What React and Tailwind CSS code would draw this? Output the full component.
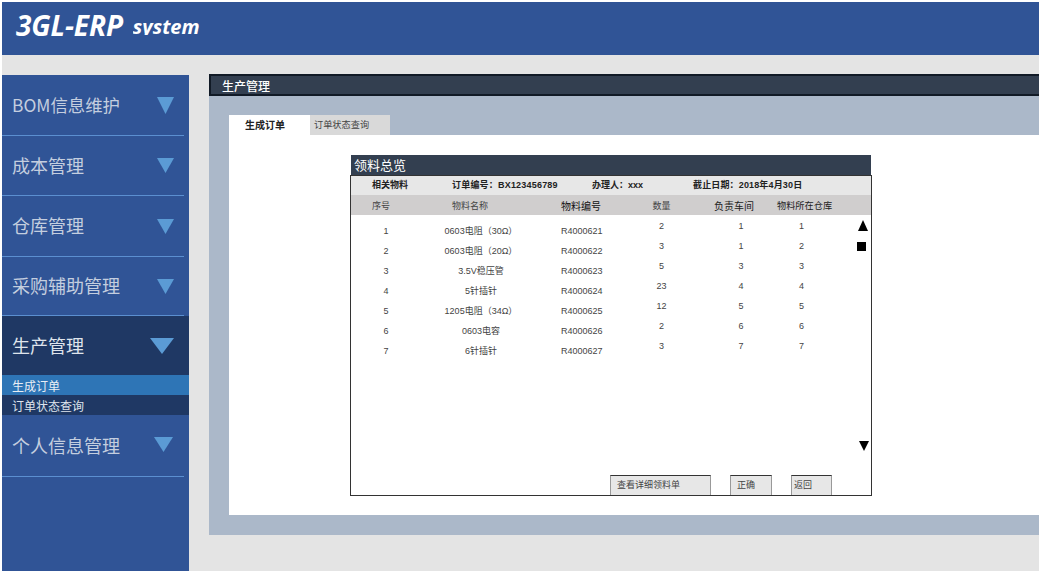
import React from "react";

const menu1 = [
  ["BOM信息维护", "h-[61px]", "mt-[2px]"],
  ["成本管理", "h-[60px]", "mt-[2px]"],
  ["仓库管理", "h-[61px]", ""],
  ["采购辅助管理", "h-[59px]", ""],
];
const left = [
  ["1", "0603电阻（30Ω）", "R4000621"],
  ["2", "0603电阻（20Ω）", "R4000622"],
  ["3", "3.5V稳压管", "R4000623"],
  ["4", "5针插针", "R4000624"],
  ["5", "1205电阻（34Ω）", "R4000625"],
  ["6", "0603电容", "R4000626"],
  ["7", "6针插针", "R4000627"],
];
const right = [
  ["2", "1", "1"],
  ["3", "1", "2"],
  ["5", "3", "3"],
  ["23", "4", "4"],
  ["12", "5", "5"],
  ["2", "6", "6"],
  ["3", "7", "7"],
];

function Tri({ w = 17, h = 17, cls = "" }) {
  return (
    <svg width={w} height={h} viewBox="0 0 10 10" preserveAspectRatio="none" className={cls}>
      <polygon points="0,0 10,0 5,10" fill="#5b9bd5" />
    </svg>
  );
}

export default function App() {
  return (
    <div className="w-[1039px] h-[572px] overflow-hidden bg-white pl-[2px] pt-[2px] pb-px font-['Liberation_Sans','Noto_Sans_CJK_SC',sans-serif]">
      <div className="h-full flex flex-col bg-[#e4e4e4]">
        <header className="h-[53px] shrink-0 bg-[#305496] flex items-start pl-[14px] text-white italic font-bold font-['Open_Sans',sans-serif]">
          <span className="text-[28px] leading-[46px] tracking-[-0.1px]">3GL-ERP</span>
          <span className="ml-[10px] mt-[10px] h-[23px] overflow-hidden text-[20px] leading-[30px]">system</span>
        </header>
        <div className="flex-1 flex pt-[20px] min-h-0">
          <aside className="w-[187px] shrink-0 bg-[#305496] text-[18px] text-[#c4cedf] font-['Noto_Sans_CJK_SC',sans-serif]">
            {menu1.map(([t, h, m], i) => (
              <div key={t} className={`${h} flex items-center justify-between pl-[10px] pr-[10px] mr-[5px] border-b border-[#5b8fd0] pb-[2px]`}>
                <span className={`${m} ${i === 0 ? "text-[17.4px]" : ""}`}>{t}</span>
                <Tri w={17} h={i === 0 ? 17 : 15} cls="mt-[2px]" />
              </div>
            ))}
            <div className="h-[59px] bg-[#1f3864] flex items-center justify-between pl-[10px] pr-[15px] text-[#dfe4ec]">
              <span>生产管理</span>
              <Tri w={24} h={16} />
            </div>
            <div className="h-[20px] bg-[#2e75b6] pl-[10px] text-[12px] leading-[21px] text-[#e8eef5]">生成订单</div>
            <div className="h-[20px] bg-[#1f3864] pl-[10px] text-[12px] leading-[21px] text-[#dfe4ec]">订单状态查询</div>
            <div className="h-[62px] mr-[5px] flex items-start justify-between pl-[10px] pr-[11px] border-b border-[#5b8fd0]">
              <span className="mt-[17px]">个人信息管理</span>
              <Tri w={19} h={15} cls="mt-[22px]" />
            </div>
          </aside>
          <main className="flex-1 ml-[20px] flex flex-col min-w-0">
            <div className="h-[461px] bg-[#abb8c9] flex flex-col -mt-px">
              <div className="h-[22px] shrink-0 bg-[#333f50] border-2 border-r-0 border-[#111a26] pl-[11px] text-[12px] font-medium leading-[19px] text-white font-['Noto_Sans_CJK_SC',sans-serif]">生产管理</div>
              <div className="flex-1 pl-[20px] pt-[19px] pb-[20px] flex flex-col min-h-0">
                <div className="flex h-[20px] shrink-0 text-[9.2px] leading-[21px]">
                  <div className="w-[81px] bg-white pl-[16px] text-[10px] font-bold text-[#222]">生成订单</div>
                  <div className="w-[80px] bg-[#d9d9d9] pl-[4px] text-[#444]">订单状态查询</div>
                </div>
                <div className="flex-1 bg-white pl-[121px] pt-[20px]">
                  <div className="w-[522px]">
                    <div className="h-[21px] ml-px mr-px bg-[#333f50] pl-[3px] text-[13px] leading-[22px] text-white">领料总览</div>
                    <div className="h-[321px] -mt-px border border-[#333] flex flex-col text-[9px] text-[#444]">
                      <div className="h-[19px] shrink-0 bg-[#e7e7e7] flex items-center font-bold text-[#222]">
                        <span className="w-[101px] pl-[21px]">相关物料</span>
                        <span className="w-[140px] whitespace-nowrap tracking-[0.2px]">订单编号：BX123456789</span>
                        <span className="w-[101px] whitespace-nowrap">办理人：xxx</span>
                        <span className="whitespace-nowrap tracking-[0.15px]">截止日期：2018年4月30日</span>
                      </div>
                      <div className="h-[20px] shrink-0 bg-[#d0cece] flex items-center pt-[3px]">
                        <span className="w-[60px] text-center">序号</span>
                        <span className="w-[150px] pl-[41px]">物料名称</span>
                        <span className="w-[80px] text-[10px] text-[#111]">物料编号</span>
                        <span className="w-[61px] text-center -ml-[10px]">数量</span>
                        <span className="w-[63px] ml-[22px] text-[10px] text-[#222] whitespace-nowrap">负责车间</span>
                        <span className="text-[9.2px] text-[#222] whitespace-nowrap">物料所在仓库</span>
                      </div>
                      <div className="flex-1 flex relative">
                        <div className="w-[281px] pt-[7px]">
                          {left.map(([n, name, code]) => (
                            <div key={n} className="h-[20px] flex items-center">
                              <span className="w-[70px] text-center">{n}</span>
                              <span className="w-[140px] -ml-[10px] mr-[10px] text-center whitespace-nowrap">{name}</span>
                              <span className="w-[71px]">{code}</span>
                            </div>
                          ))}
                        </div>
                        <div className="pt-[2px]">
                          {right.map(([a, b, c], i) => (
                            <div key={i} className="h-[20px] flex items-center">
                              <span className="w-[59px] text-center">{a}</span>
                              <span className="w-[100px] text-center">{b}</span>
                              <span className="w-[21px] text-center">{c}</span>
                            </div>
                          ))}
                        </div>
                        <span className="absolute left-[507px] top-[5px] w-0 h-0 border-l-[5px] border-r-[5px] border-b-[11px] border-l-transparent border-r-transparent border-b-black" />
                        <span className="absolute left-[506px] top-[27px] w-[9px] h-[9px] bg-black" />
                        <span className="absolute left-[508px] top-[226px] w-0 h-0 border-l-[5px] border-r-[5px] border-t-[10px] border-l-transparent border-r-transparent border-t-black" />
                      </div>
                      <div className="h-[20px] shrink-0 flex text-[#444]">
                        <button className="ml-[259px] w-[101px] bg-[#e7e7e7] border-t border-x border-t-[#333] border-l-[#999] border-r-[#999] pl-[6px] text-left">查看详细领料单</button>
                        <button className="ml-[19px] w-[42px] bg-[#e7e7e7] border-t border-x border-t-[#333] border-l-[#999] border-r-[#999] pl-[6px] text-left">正确</button>
                        <button className="ml-[19px] w-[41px] bg-[#e7e7e7] border-t border-x border-t-[#333] border-l-[#999] border-r-[#999] pl-[2px] text-left">返回</button>
                      </div>
                    </div>
                  </div>
                </div>
              </div>
            </div>
          </main>
        </div>
      </div>
    </div>
  );
}
